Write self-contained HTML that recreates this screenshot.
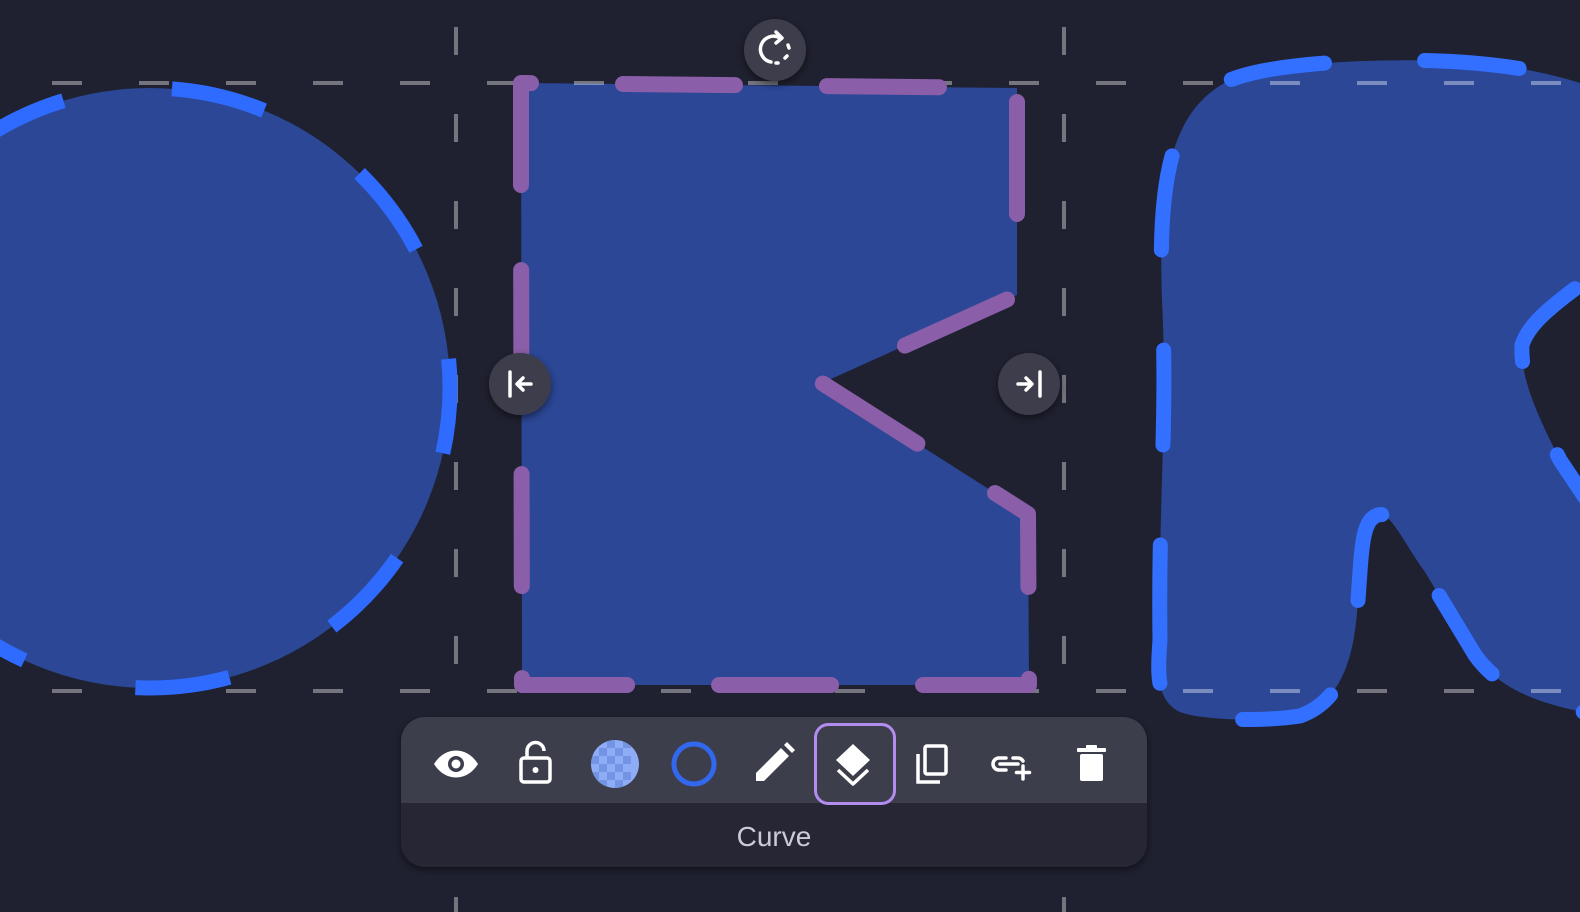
<!DOCTYPE html>
<html><head><meta charset="utf-8"><style>
html,body{margin:0;padding:0;background:#1f2130;width:1580px;height:912px;overflow:hidden;font-family:"Liberation Sans",sans-serif}
svg{position:absolute;left:0;top:0}
</style></head><body>
<svg width="1580" height="912" viewBox="0 0 1580 912">
<defs>
<filter id="sh" x="-50%" y="-50%" width="200%" height="200%"><feDropShadow dx="0" dy="3" stdDeviation="4" flood-color="#000" flood-opacity="0.5"/></filter>
<clipPath id="cc"><circle cx="615" cy="764" r="24"/></clipPath>
</defs>
<rect width="1580" height="912" fill="#1f2130"/>
<!-- fills -->
<circle cx="150" cy="388" r="300" fill="#2b4796"/>
<path d="M521,83 L1017,88 L1017,295 L822,383 L1028,514 L1029,685 L522,685 Z" fill="#2b4796"/>
<path id="rb" d="M1160,640 C1158,500 1168,420 1162,300 C1158,180 1170,110 1230,80 C1280,60 1400,58 1460,62 C1520,66 1560,75 1600,90 L1600,270 C1560,300 1530,320 1522,345 C1520,380 1540,420 1560,460 L1600,520 L1600,715 C1540,705 1500,690 1475,655 L1425,572 C1405,545 1390,510 1378,515 C1362,520 1362,545 1358,600 C1355,650 1345,700 1300,716 C1260,722 1200,720 1180,712 C1155,700 1158,670 1160,640 Z" fill="#2b4796"/>
<!-- guides -->
<g stroke="#fff" stroke-opacity="0.38" stroke-width="4">
<line x1="52" y1="83" x2="1580" y2="83" stroke-dasharray="30 57"/>
<line x1="52" y1="691" x2="1580" y2="691" stroke-dasharray="30 57"/>
<line x1="456" y1="27" x2="456" y2="912" stroke-dasharray="28 59"/>
<line x1="1064" y1="27" x2="1064" y2="912" stroke-dasharray="28 59"/>
</g>
<!-- strokes -->
<circle cx="150" cy="388" r="300" fill="none" stroke="#2f6bff" stroke-width="15" stroke-dasharray="95 115" stroke-dashoffset="-22" transform="rotate(-90 150 388)"/>
<path d="M521,185 L521,83 L1017,88 L1017,295 L822,383 L1028,514 L1029,685 L522,685 Z" fill="none" stroke="#8a5ea8" stroke-width="16" stroke-linecap="round" stroke-linejoin="round" stroke-dasharray="112 92"/>
<path d="M1160,640 C1158,500 1168,420 1162,300 C1158,180 1170,110 1230,80 C1280,60 1400,58 1460,62 C1520,66 1560,75 1600,90 L1600,270 C1560,300 1530,320 1522,345 C1520,380 1540,420 1560,460 L1600,520 L1600,715 C1540,705 1500,690 1475,655 L1425,572 C1405,545 1390,510 1378,515 C1362,520 1362,545 1358,600 C1355,650 1345,700 1300,716 C1260,722 1200,720 1180,712 C1155,700 1158,670 1160,640 Z" fill="none" stroke="#3370ff" stroke-width="15" stroke-linecap="round" stroke-dasharray="95 100"/>
<!-- handles -->
<g filter="url(#sh)" fill="#3d3e4c">
<circle cx="775" cy="50" r="31"/><circle cx="520" cy="384" r="31"/><circle cx="1029" cy="384" r="31"/>
</g>
<g stroke="#fff" stroke-width="3.5" fill="none" stroke-linecap="round">
<path d="M780,38 A13,13 0 1 0 771,62"/>
<path d="M776,32 L782,38 L776,43" stroke-linejoin="round"/>
<path d="M788,45 l1,3 M787,56 l-2,2 M778,63 l-2,0" />
<line x1="510" y1="372" x2="510" y2="396"/>
<line x1="531" y1="384" x2="518" y2="384"/>
<path d="M523,378 L517,384 L523,390" stroke-linejoin="round"/>
<line x1="1040" y1="372" x2="1040" y2="396"/>
<line x1="1018" y1="384" x2="1031" y2="384"/>
<path d="M1026,378 L1032,384 L1026,390" stroke-linejoin="round"/>
</g>
<!-- toolbar -->
<g filter="url(#sh)">
<rect x="401" y="717" width="746" height="150" rx="24" fill="#252736"/>
</g>
<path d="M425,717 H1123 A24,24 0 0 1 1147,741 V803 H401 V741 A24,24 0 0 1 425,717 Z" fill="#3d3e4c"/>
<rect x="815.5" y="724.5" width="79" height="79" rx="13" fill="none" stroke="#b28df0" stroke-width="3"/>
<path d="M434,764 C445,746 467,746 478,764 C467,782 445,782 434,764 Z" fill="#fff"/>
<circle cx="456" cy="764" r="8" fill="#3d3e4c"/><circle cx="456" cy="764" r="4.5" fill="#fff"/>
<rect x="521" y="758" width="29" height="24" rx="3" fill="none" stroke="#fff" stroke-width="3.5"/>
<path d="M527,758 V751 A8.5,8.5 0 0 1 544,751" fill="none" stroke="#fff" stroke-width="3.5"/>
<circle cx="535.5" cy="770" r="3" fill="#fff"/>
<g clip-path="url(#cc)">
<rect x="590" y="740" width="50" height="50" fill="#8fadf7"/>
<g fill="#7393e3"><rect x="599" y="748" width="8" height="8"/><rect x="615" y="748" width="8" height="8"/><rect x="607" y="756" width="8" height="8"/><rect x="623" y="756" width="8" height="8"/><rect x="599" y="764" width="8" height="8"/><rect x="615" y="764" width="8" height="8"/><rect x="607" y="772" width="8" height="8"/><rect x="623" y="772" width="8" height="8"/><rect x="591" y="756" width="8" height="8"/><rect x="591" y="772" width="8" height="8"/><rect x="599" y="780" width="8" height="8"/><rect x="615" y="780" width="8" height="8"/><rect x="607" y="740" width="8" height="8"/><rect x="623" y="740" width="8" height="8"/></g>
</g>
<circle cx="694" cy="764" r="20" fill="none" stroke="#3168ee" stroke-width="5"/>
<path d="M756,781 L756,773 L781,748 L789,756 L764,781 Z M784,745 L787,742 L795,750 L792,753 Z" fill="#fff"/>
<path d="M853,744 L870,760 L853,776 L836,760 Z" fill="#fff"/>
<path d="M838,770 L853,784 L868,770" fill="none" stroke="#fff" stroke-width="3.5" stroke-linejoin="round"/>
<rect x="925" y="746" width="21" height="28" rx="2" fill="none" stroke="#fff" stroke-width="3.5"/>
<path d="M918,754 V782 H940" fill="none" stroke="#fff" stroke-width="3.5"/>
<path d="M1006,758 H999 A6,6 0 0 0 999,770 H1006 M1000,764 H1018 M1023,761 A6,6 0 0 0 1018,758 H1013" fill="none" stroke="#fff" stroke-width="3.5" stroke-linecap="round"/>
<path d="M1023,766 V779 M1016.5,772.5 H1029.5" stroke="#fff" stroke-width="3.5" stroke-linecap="round"/>
<rect x="1080" y="754" width="23" height="27" rx="2" fill="#fff"/>
<rect x="1077" y="748" width="29" height="4" rx="1" fill="#fff"/>
<rect x="1086" y="745" width="11" height="4" rx="1" fill="#fff"/>
<text x="774" y="846" text-anchor="middle" font-family="Liberation Sans, sans-serif" font-size="28" fill="#c9cbd5">Curve</text>
</svg>
</body></html>
